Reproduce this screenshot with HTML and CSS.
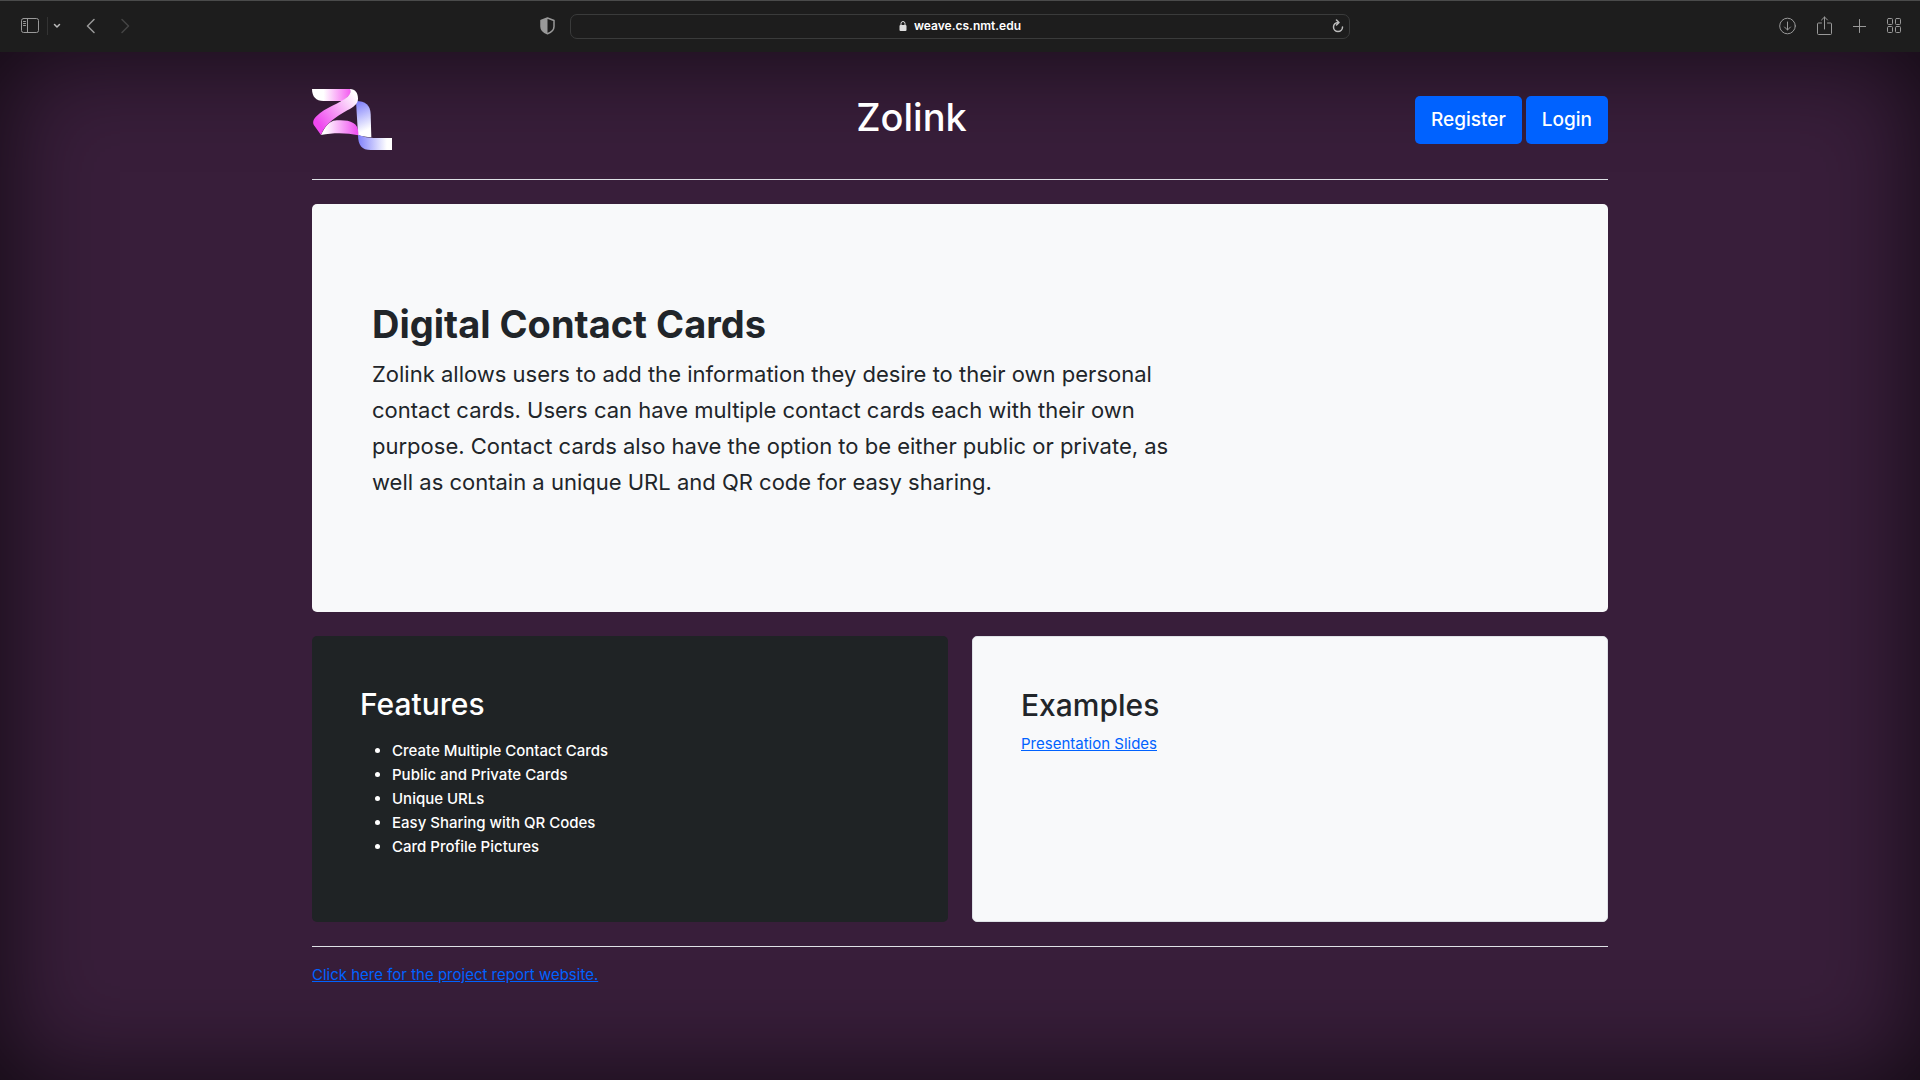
FILE: index.html
```html
<!DOCTYPE html>
<html lang="en">
<head>
<meta charset="utf-8">
<meta name="viewport" content="width=device-width, initial-scale=1">
<title>Zolink</title>
<link rel="stylesheet" href="styles.css">
</head>
<body>
<div class="toolbar">
  <div class="toolbar-side">
    <button class="tool tool-sidebar" aria-label="Show sidebar">
      <svg width="18" height="16" viewBox="0 0 18 16"><rect x=".5" y=".5" width="17" height="14" rx="2"/><path d="M6.500 .5v14M2.500 3.500h2M2.500 5.500h2M2.500 7.500h2"/></svg>
    </button>
    <button class="tool tool-menu" aria-label="Tab groups">
      <svg width="8" height="6" viewBox="0 0 8 6"><path class="bold" d="M1.500 1.500l2.500 2.500 2.500-2.500"/></svg>
    </button>
    <button class="tool tool-back" aria-label="Back">
      <svg width="9" height="16" viewBox="0 0 9 16"><path class="bold" d="M8 1.500L1.500 8 8 14.500"/></svg>
    </button>
    <button class="tool tool-forward" aria-label="Forward" disabled>
      <svg width="9" height="16" viewBox="0 0 9 16"><path class="bold" d="M1 1.500L7.500 8 1 14.500"/></svg>
    </button>
    <button class="tool tool-shield" aria-label="Privacy report">
      <svg width="15" height="18" viewBox="0 0 15 18"><path class="bold" d="M7.500 1L14 3.500V9.500C14 13 11 15.500 7.500 16.800 4 15.500 1 13 1 9.500V3.500z"/><path class="solid" d="M7.500 1v15.800C4 15.500 1 13 1 9.500V3.500z"/></svg>
    </button>
  </div>
  <div class="address">
    <svg class="lock" width="8" height="12" viewBox="0 0 8 12"><rect class="solid" x=".5" y="5" width="7" height="6" rx="1"/><path d="M2 5.500V3.500a2 2 0 0 1 4 0v2"/></svg>
    <input class="address-input" type="text" aria-label="Address" value="weave.cs.nmt.edu" size="14">
    <button class="tool reload" aria-label="Reload">
      <svg width="12" height="14" viewBox="0 0 12 14"><path class="bold" d="M6 3.500A4.500 4.500 0 1 0 10.500 8M4.500 1L7 3.500 4.500 6"/></svg>
    </button>
  </div>
  <div class="toolbar-side toolbar-right">
    <button class="tool" aria-label="Downloads">
      <svg width="17" height="18" viewBox="0 0 17 18"><circle cx="8.500" cy="9" r="7.800"/><path d="M8.500 5v8M5.500 10l3 3 3-3"/></svg>
    </button>
    <button class="tool" aria-label="Share">
      <svg width="15" height="20" viewBox="0 0 15 20"><path d="M4.500 7H1.500a1 1 0 0 0-1 1v9.500a1 1 0 0 0 1 1h12a1 1 0 0 0 1-1V8a1 1 0 0 0-1-1h-3M7.500 13V1M4.500 4l3-3 3 3"/></svg>
    </button>
    <button class="tool" aria-label="New tab">
      <svg width="13" height="14" viewBox="0 0 13 14"><path d="M6.500 .5v13M0 7.500h13"/></svg>
    </button>
    <button class="tool" aria-label="Tab overview">
      <svg width="15" height="16" viewBox="0 0 15 16"><rect x=".5" y=".5" width="5" height="6" rx="1"/><rect x="8.500" y=".5" width="5" height="6" rx="1"/><rect x=".5" y="8.500" width="5" height="6" rx="1"/><rect x="8.500" y="8.500" width="5" height="6" rx="1"/></svg>
    </button>
  </div>
</div>

<div class="page">
  <div class="container">
    <header class="site-header">
      <svg class="logo" viewBox="36 54 240 189" role="img" aria-label="Zolink logo">
        <defs>
          <linearGradient id="top"><stop offset=".3" stop-color="#fff"/><stop offset="1" stop-color="#f45cf0"/></linearGradient>
          <linearGradient id="diag" x1="1" y1="0" x2="0" y2=".8"><stop offset=".1" stop-color="#fff"/><stop offset=".9" stop-color="#ef49ef"/></linearGradient>
          <linearGradient id="base"><stop offset=".1" stop-color="#fff"/><stop offset="1" stop-color="#ee4cf0"/></linearGradient>
          <linearGradient id="stem" x1="0" y1="0" x2=".2" y2="1"><stop offset="0" stop-color="#7878fb"/><stop offset=".9" stop-color="#fff"/></linearGradient>
          <linearGradient id="foot"><stop offset="0" stop-color="#8080fa"/><stop offset=".85" stop-color="#fff"/></linearGradient>
        </defs>
        <path fill="url(#stem)" d="M168 93C196 93 211 106 212 132L214 202C200 201 186 199 174 195z"/>
        <path fill="url(#foot)" d="M174 194C190 200 206 204 230 204H276V240H212C186 240 174 226 174 194z"/>
        <path fill="url(#base)" d="M63 195C72 174 84 158 100 152C142 148 175 154 175 188V196C140 188 100 188 63 195z"/>
        <path fill="url(#top)" d="M36 57H152V72L130 93H70C48 93 36 80 36 57z"/>
        <path fill="url(#diag)" d="M150 57C166 58 174 68 174 86C174 102 160 111 142 121C108 141 76 160 63 195L41 164C37 154 42 146 50 138C76 111 118 102 143 80C152 72 153 64 150 57z"/>
      </svg>
      <h1 class="site-title">Zolink</h1>
      <div class="actions">
        <button class="btn">Register</button>
        <button class="btn">Login</button>
      </div>
    </header>

    <main>
      <section class="hero">
        <h2 class="hero-title">Digital Contact Cards</h2>
        <p class="hero-text">Zolink allows users to add the information they desire to their own personal contact cards. Users can have multiple contact cards each with their own purpose. Contact cards also have the option to be either public or private, as well as contain a unique URL and QR code for easy sharing.</p>
      </section>
      <div class="cards">
        <section class="card card-dark">
          <h2 class="card-title">Features</h2>
          <ul class="features">
            <li>Create Multiple Contact Cards</li>
            <li>Public and Private Cards</li>
            <li>Unique URLs</li>
            <li>Easy Sharing with QR Codes</li>
            <li>Card Profile Pictures</li>
          </ul>
        </section>
        <section class="card card-light">
          <h2 class="card-title">Examples</h2>
          <a href="#slides">Presentation Slides</a>
        </section>
      </div>
    </main>

    <footer class="site-footer">
      <a href="#report">Click here for the project report website.</a>
    </footer>
  </div>
</div>
</body>
</html>
```
FILE: styles.css
```css
* {
  box-sizing: border-box;
}

body {
  margin: 0;
  min-height: 100vh;
  display: flex;
  flex-direction: column;
  font-family: Inter, "Liberation Sans", sans-serif;
  font-size: 15px;
  line-height: 24px;
  color: #212529;
  background: #381e3a;
}

h1, h2, p, ul {
  margin: 0;
}

a {
  color: #0062ff;
}

/* Browser toolbar */
.toolbar {
  display: grid;
  grid-template-columns: 1fr minmax(0, 780px) 1fr;
  align-items: center;
  height: 52px;
  background: #1d1d1d;
  border-top: 1px solid #4a4b4b;
}

.toolbar-side {
  display: flex;
  align-items: center;
  padding: 0 15px 2px 21px;
}

.toolbar-right {
  justify-content: flex-end;
  gap: 21px;
  padding: 0 18px 2px 0;
}

.tool {
  display: flex;
  padding: 0;
  border: 0;
  background: none;
  color: #999;
}

.tool svg,
.lock {
  fill: none;
  stroke: currentColor;
  stroke-width: 1;
  stroke-linecap: round;
  stroke-linejoin: round;
}

.toolbar .bold {
  stroke-width: 1.5;
}

.toolbar .solid {
  fill: currentColor;
  stroke: none;
}

.tool-menu {
  align-items: center;
  height: 18px;
  margin-left: 8px;
  padding-left: 5px;
  border-left: 1px solid #333;
  color: #bbb;
}

.tool-back {
  margin-left: 25px;
}

.tool-forward {
  margin-left: 26px;
  color: #444;
}

.tool-shield {
  margin-left: auto;
}

.address {
  position: relative;
  display: flex;
  align-items: center;
  justify-content: center;
  gap: 7px;
  height: 25px;
  padding-bottom: 2px;
  border: 1px solid #3a3b3b;
  border-radius: 7px;
}

.lock {
  color: #ddd;
}

.address-input {
  field-sizing: content;
  padding: 0;
  border: 0;
  outline: 0;
  background: none;
  color: #fff;
  font: 600 12px/20px Inter, "Liberation Sans", sans-serif;
}

.reload {
  position: absolute;
  right: 5px;
  color: #bbb;
}

/* Page */
.page {
  flex: 1;
  padding: 24px 12px;
  box-shadow: inset 0 0 100px rgba(0, 0, 0, .7);
}

.container {
  max-width: 1296px;
  margin: 0 auto;
}

.site-header {
  display: flex;
  align-items: center;
  justify-content: space-between;
  padding: 12px 0 28px;
  margin-bottom: 24px;
  border-bottom: 1px solid #dee2e6;
}

.logo {
  width: 80px;
  height: 63px;
}

.site-title {
  padding: 0 0 6px 16px;
  color: #fff;
  font-size: 38px;
  font-weight: 500;
  line-height: 48px;
}

.actions {
  display: flex;
  gap: 4px;
}

.btn {
  padding: 8px 16px;
  border: 0;
  border-radius: 5px;
  background: #0062ff;
  color: #fff;
  font: 500 19px/32px Inter, "Liberation Sans", sans-serif;
}

.hero {
  padding: 96px 60px 112px;
  margin-bottom: 24px;
  border-radius: 5px;
  background: #f8f9fa;
}

.hero-title {
  margin-bottom: 8px;
  font-size: 38px;
  font-weight: 700;
  line-height: 48px;
}

.hero-text {
  max-width: 800px;
  font-size: 22px;
  line-height: 36px;
}

.cards {
  display: grid;
  grid-template-columns: 1fr 1fr;
  gap: 24px;
}

.card {
  padding: 49px 48px 47px;
  border-radius: 5px;
}

.card-dark {
  background: #1f2325;
  color: #fff;
}

.card-light {
  border: 1px solid #dee2e6;
  background: #f8f9fa;
}

.card-title {
  margin-bottom: 8px;
  font-size: 30px;
  font-weight: 500;
  line-height: 38px;
}

.features {
  margin: 16px 0;
  padding-left: 32px;
  font-weight: 500;
}

.site-footer {
  margin-top: 24px;
  padding-top: 16px;
  border-top: 1px solid #dee2e6;
}
```
